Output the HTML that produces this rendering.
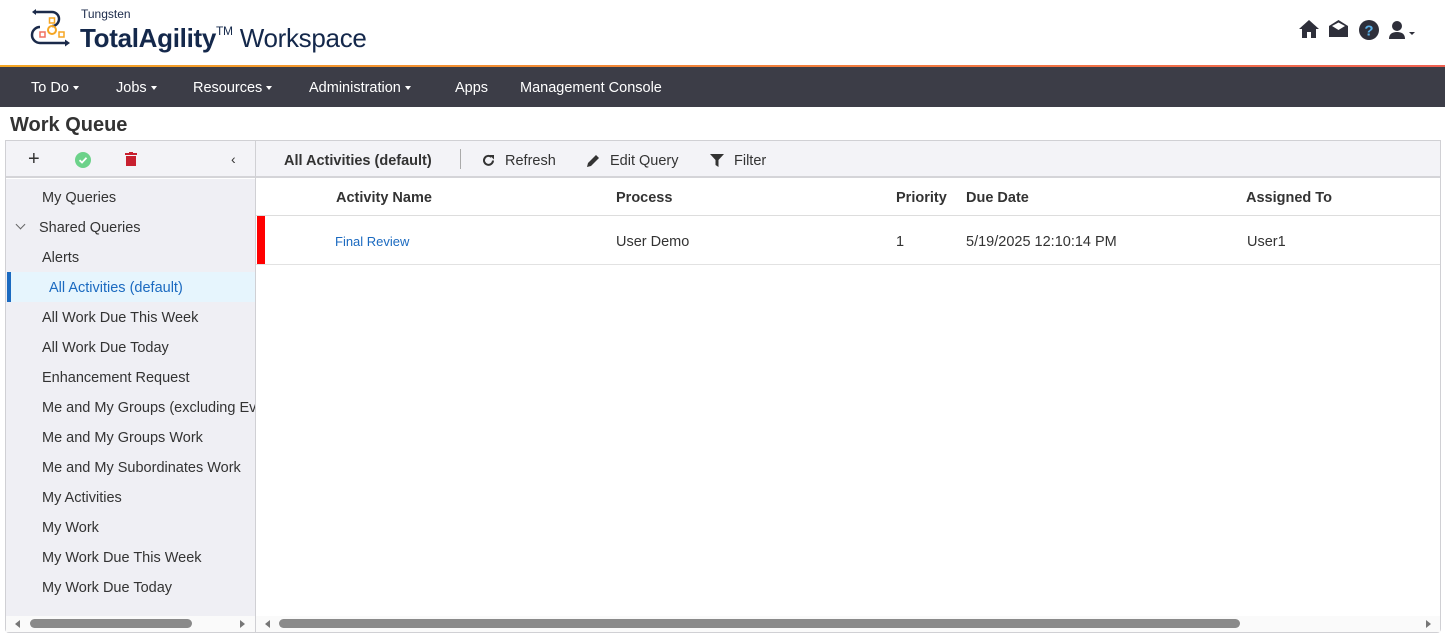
<!DOCTYPE html>
<html><head><style>
*{box-sizing:border-box;margin:0;padding:0}
body{width:1445px;height:638px;overflow:hidden;background:#fff;font-family:"Liberation Sans",sans-serif;color:#333;position:relative}
.a{position:absolute}
.nav span{position:absolute;top:80px;color:#fff;font-size:14.5px}
.li{position:absolute;left:42px;font-size:14.5px;color:#333}
.th{position:absolute;top:190px;font-weight:bold;font-size:14.5px;color:#333}
.td{position:absolute;top:234px;font-size:14.5px;color:#333}
.car{display:inline-block;width:0;height:0;border-left:3.5px solid transparent;border-right:3.5px solid transparent;border-top:4px solid #fff;vertical-align:middle;margin-left:4px}
</style></head><body>
<svg class="a" style="left:30px;top:8px" width="46" height="42" viewBox="0 0 46 42">
<path d="M6 4 H22 a7 7 0 0 1 0 14" fill="none" stroke="#1b2a4a" stroke-width="2.5"/>
<path d="M2 4 l4-3 v6z" fill="#1b2a4a"/>
<path d="M10 19 a8 8 0 0 0 0 16 H36" fill="none" stroke="#1b2a4a" stroke-width="2.5"/>
<path d="M40 35 l-5-3.5 v7z" fill="#1b2a4a"/>
<circle cx="22" cy="22" r="4" fill="none" stroke="#f5a623" stroke-width="2"/>
<rect x="19.5" y="10" width="5" height="5" fill="#fff" stroke="#f5a623" stroke-width="1.5"/>
<rect x="10" y="24" width="5" height="5" fill="#fff" stroke="#f07060" stroke-width="1.5"/>
<rect x="29" y="24" width="5" height="5" fill="#fff" stroke="#f5a623" stroke-width="1.5"/>
</svg>
<div class="a" style="left:81px;top:7px;font-size:12px;color:#1b2a4a">Tungsten</div>
<div class="a" style="left:80px;top:23px;font-size:26px;color:#14284b;letter-spacing:-0.3px"><b>TotalAgility</b><span style="font-size:12px;vertical-align:12px">TM</span> Workspace</div>
<svg class="a" style="left:1298px;top:19px" width="22" height="20" viewBox="0 0 22 20"><path d="M11 1 L21 10 H18 V19 H13 V13 H9 V19 H4 V10 H1Z" fill="#2e2f3a"/></svg>
<svg class="a" style="left:1328px;top:19px" width="21" height="19" viewBox="0 0 21 19"><path d="M1 7 L10.5 1 L20 7 V18 H1Z" fill="#2e2f3a"/><path d="M4 7 L10.5 3.5 L17 7 L10.5 11Z" fill="#fff"/></svg>
<svg class="a" style="left:1358px;top:19px" width="22" height="22" viewBox="0 0 22 22"><circle cx="11" cy="11" r="10" fill="#2e2f3a"/><text x="11" y="16.5" text-anchor="middle" font-family="Liberation Sans" font-weight="bold" font-size="15" fill="#5ab0e8">?</text></svg>
<svg class="a" style="left:1389px;top:20px" width="32" height="20" viewBox="0 0 32 20"><circle cx="8" cy="6" r="5" fill="#2e2f3a"/><path d="M0 19 Q0 12 8 12 Q16 12 16 19Z" fill="#2e2f3a"/><path d="M20 12 h6 l-3 3z" fill="#2e2f3a"/></svg>
<div class="a" style="left:0;top:65px;width:1445px;height:2px;background:linear-gradient(90deg,#f5a623,#f06050)"></div>
<div class="a" style="left:0;top:67px;width:1445px;height:40px;background:#3c3d47"></div>
<div class="nav">
<span style="left:31px">To Do<i class="car"></i></span>
<span style="left:116px">Jobs<i class="car"></i></span>
<span style="left:193px">Resources<i class="car"></i></span>
<span style="left:309px">Administration<i class="car"></i></span>
<span style="left:455px">Apps</span>
<span style="left:520px">Management Console</span>
</div>
<div class="a" style="left:10px;top:114px;font-size:20px;font-weight:bold;color:#333">Work Queue</div>
<div class="a" style="left:5px;top:140px;width:1436px;height:493px;border:1px solid #d0d0d4;border-radius:0 0 4px 4px"></div>
<div class="a" style="left:6px;top:141px;width:1434px;height:37px;background:#f3f3f7;border-bottom:2px solid #d4d4d8"></div>
<div class="a" style="left:6px;top:179px;width:250px;height:437px;background:#efeff4"></div>
<div class="a" style="left:255px;top:141px;width:1px;height:491px;background:#d0d0d4"></div>
<div class="a" style="left:28px;top:148px;font-size:20px;color:#333">+</div>
<svg class="a" style="left:75px;top:152px" width="16" height="16" viewBox="0 0 16 16"><circle cx="8" cy="8" r="8" fill="#6cd28a"/><path d="M4.5 8.2 L7 10.5 L11.5 5.8" fill="none" stroke="#fff" stroke-width="1.8"/></svg>
<svg class="a" style="left:125px;top:152px" width="12" height="14" viewBox="0 0 12 14"><rect x="0" y="1" width="12" height="2" fill="#c8202f"/><rect x="4" y="0" width="4" height="2" fill="#c8202f"/><rect x="1" y="4" width="10" height="10" fill="#c8202f"/></svg>
<div class="a" style="left:231px;top:151px;font-size:14px;color:#333">&#8249;</div>
<div class="a" style="left:284px;top:153px;font-size:14.5px;font-weight:bold;color:#333">All Activities (default)</div>
<div class="a" style="left:460px;top:149px;width:1px;height:20px;background:#aaa"></div>
<svg class="a" style="left:482px;top:154px" width="13" height="13" viewBox="0 0 13 13"><path d="M11 6.5 A4.5 4.5 0 1 1 9.5 3" fill="none" stroke="#333" stroke-width="2"/><path d="M7.5 1 L12 1 L12 5.5Z" fill="#333"/></svg>
<div class="a" style="left:505px;top:153px;font-size:14.5px">Refresh</div>
<svg class="a" style="left:586px;top:153px" width="15" height="15" viewBox="0 0 15 15"><path d="M1 14 L2 10 L10 2 L13 5 L5 13Z" fill="#333"/></svg>
<div class="a" style="left:610px;top:153px;font-size:14.5px">Edit Query</div>
<svg class="a" style="left:710px;top:154px" width="14" height="14" viewBox="0 0 14 14"><path d="M0 0 H14 L8.5 6 V13 L5.5 11 V6Z" fill="#333"/></svg>
<div class="a" style="left:734px;top:153px;font-size:14.5px">Filter</div>
<div class="li" style="top:190px">My Queries</div>
<div class="a" style="left:17px;top:221px;width:7px;height:7px;border-right:1.5px solid #666;border-bottom:1.5px solid #666;transform:rotate(45deg)"></div>
<div class="li" style="left:39px;top:220px">Shared Queries</div>
<div class="li" style="top:250px">Alerts</div>
<div class="a" style="left:7px;top:272px;width:248px;height:30px;background:#e6f5fd;border-left:4px solid #1b6ac0"></div>
<div class="li" style="left:49px;top:280px;color:#1b6ac0">All Activities (default)</div>
<div class="li" style="top:310px">All Work Due This Week</div>
<div class="li" style="top:340px">All Work Due Today</div>
<div class="li" style="top:370px">Enhancement Request</div>
<div class="li" style="top:400px;width:213px;white-space:nowrap;overflow:hidden">Me and My Groups (excluding Every</div>
<div class="li" style="top:430px">Me and My Groups Work</div>
<div class="li" style="top:460px">Me and My Subordinates Work</div>
<div class="li" style="top:490px">My Activities</div>
<div class="li" style="top:520px">My Work</div>
<div class="li" style="top:550px">My Work Due This Week</div>
<div class="li" style="top:580px">My Work Due Today</div>
<div class="th" style="left:336px">Activity Name</div>
<div class="th" style="left:616px">Process</div>
<div class="th" style="left:896px">Priority</div>
<div class="th" style="left:966px">Due Date</div>
<div class="th" style="left:1246px">Assigned To</div>
<div class="a" style="left:256px;top:215px;width:1184px;height:1px;background:#ddd"></div>
<div class="a" style="left:257px;top:216px;width:8px;height:48px;background:#f00"></div>
<div class="td" style="left:335px;color:#1b6ac0;font-size:13px;top:234px">Final Review</div>
<div class="td" style="left:616px">User Demo</div>
<div class="td" style="left:896px">1</div>
<div class="td" style="left:966px">5/19/2025 12:10:14 PM</div>
<div class="td" style="left:1247px">User1</div>
<div class="a" style="left:256px;top:264px;width:1184px;height:1px;background:#e2e2e2"></div>
<div class="a" style="left:6px;top:616px;width:249px;height:16px;background:#fafafa"></div>
<div class="a" style="left:15px;top:620px;width:0;height:0;border-top:4px solid transparent;border-bottom:4px solid transparent;border-right:5px solid #777"></div>
<div class="a" style="left:30px;top:619px;width:162px;height:9px;border-radius:5px;background:#8a8a8a"></div>
<div class="a" style="left:240px;top:620px;width:0;height:0;border-top:4px solid transparent;border-bottom:4px solid transparent;border-left:5px solid #777"></div>
<div class="a" style="left:256px;top:616px;width:1184px;height:16px;background:#fafafa"></div>
<div class="a" style="left:265px;top:620px;width:0;height:0;border-top:4px solid transparent;border-bottom:4px solid transparent;border-right:5px solid #777"></div>
<div class="a" style="left:279px;top:619px;width:961px;height:9px;border-radius:5px;background:#8a8a8a"></div>
<div class="a" style="left:1426px;top:620px;width:0;height:0;border-top:4px solid transparent;border-bottom:4px solid transparent;border-left:5px solid #777"></div>
</body></html>
